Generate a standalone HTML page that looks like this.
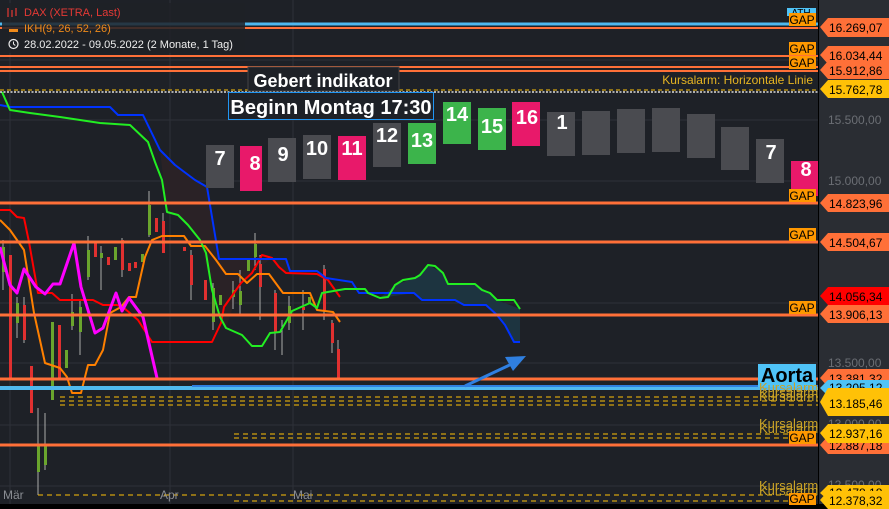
<!DOCTYPE html>
<html><head><meta charset="utf-8"><style>
html,body{margin:0;padding:0;background:#1e2127;}
body{width:889px;height:509px;overflow:hidden;position:relative;font-family:"Liberation Sans",sans-serif;}
svg{position:absolute;left:0;top:0}
</style></head><body>
<svg width="889" height="509" viewBox="0 0 889 509" xmlns="http://www.w3.org/2000/svg" font-family="Liberation Sans, sans-serif">
<rect x="0" y="0" width="889" height="509" fill="#1e2127"/>
<rect x="818" y="0" width="71" height="509" fill="#2a2d33"/>
<rect x="0" y="504" width="889" height="5" fill="#000"/>
<!-- grid -->
<g stroke="#2e3138" stroke-width="1">
<line x1="10" y1="0" x2="10" y2="504"/><line x1="170" y1="0" x2="170" y2="504"/><line x1="293" y1="0" x2="293" y2="504"/>
<line x1="0" y1="120" x2="818" y2="120"/><line x1="0" y1="181" x2="818" y2="181"/><line x1="0" y1="243" x2="818" y2="243"/><line x1="0" y1="303" x2="818" y2="303"/><line x1="0" y1="363" x2="818" y2="363"/><line x1="0" y1="425" x2="818" y2="425"/><line x1="0" y1="486" x2="818" y2="486"/>
<line x1="0" y1="60" x2="818" y2="60"/>
</g>
<!-- cloud fills -->
<polygon points="160,150 195,180 207,187 219,259 286,259 290,271 317,271 326,278 340,297 317,274 286,273 272,258 252,273 241,283 226,328 212,290 200,240 178,215 167,212" fill="#2a2226"/>
<polygon points="380,298 395,285 415,278 428,265 443,273 448,284 475,284 490,293 497,300 520,309 520,342 514,342 505,325 497,315 486,305 464,305 455,300 422,300 414,293" fill="#1d3440"/>
<!-- candles -->
<g stroke-width="1">
<g stroke="#aaa"><line x1="3" y1="240" x2="3" y2="290"/><line x1="17" y1="297" x2="17" y2="338"/><line x1="24" y1="297" x2="24" y2="343"/><line x1="38" y1="408" x2="38" y2="495"/><line x1="45" y1="413" x2="45" y2="470"/><line x1="72" y1="294" x2="72" y2="330"/><line x1="80" y1="300" x2="80" y2="355"/><line x1="88" y1="236" x2="88" y2="280"/><line x1="101" y1="246" x2="101" y2="290"/><line x1="122" y1="238" x2="122" y2="277"/><line x1="149" y1="191" x2="149" y2="237"/><line x1="163" y1="213" x2="163" y2="253"/><line x1="191" y1="250" x2="191" y2="300"/><line x1="213" y1="283" x2="213" y2="330"/><line x1="233" y1="281" x2="233" y2="309"/><line x1="240" y1="270" x2="240" y2="315"/><line x1="255" y1="233" x2="255" y2="270"/><line x1="260" y1="255" x2="260" y2="320"/><line x1="275" y1="290" x2="275" y2="350"/><line x1="282" y1="320" x2="282" y2="355"/><line x1="289" y1="296" x2="289" y2="330"/><line x1="303" y1="290" x2="303" y2="330"/><line x1="324" y1="265" x2="324" y2="320"/><line x1="332" y1="320" x2="332" y2="353"/><line x1="338" y1="340" x2="338" y2="379"/></g>
<g fill="#6aa52d"><rect x="2" y="247" width="3" height="25"/><rect x="16" y="303" width="3" height="20"/><rect x="37" y="445" width="3" height="27"/><rect x="44" y="445" width="3" height="20"/><rect x="51" y="322" width="3" height="78"/><rect x="65" y="350" width="3" height="18"/><rect x="71" y="312" width="3" height="14"/><rect x="79" y="307" width="3" height="25"/><rect x="87" y="250" width="3" height="27"/><rect x="100" y="253" width="3" height="5"/><rect x="114" y="247" width="3" height="13"/><rect x="141" y="254" width="3" height="8"/><rect x="148" y="205" width="3" height="30"/><rect x="212" y="288" width="3" height="34"/><rect x="219" y="295" width="3" height="10"/><rect x="232" y="290" width="3" height="7"/><rect x="239" y="291" width="3" height="14"/><rect x="247" y="259" width="3" height="12"/><rect x="254" y="244" width="3" height="13"/><rect x="288" y="306" width="3" height="17"/><rect x="308" y="297" width="3" height="6"/></g>
<g fill="#e03030"><rect x="9" y="255" width="3" height="125"/><rect x="23" y="305" width="3" height="35"/><rect x="30" y="366" width="3" height="47"/><rect x="58" y="325" width="3" height="55"/><rect x="94" y="242" width="3" height="15"/><rect x="107" y="257" width="3" height="8"/><rect x="121" y="240" width="3" height="30"/><rect x="128" y="263" width="3" height="8"/><rect x="134" y="262" width="3" height="6"/><rect x="155" y="218" width="3" height="14"/><rect x="162" y="221" width="3" height="32"/><rect x="183" y="247" width="3" height="4"/><rect x="190" y="255" width="3" height="30"/><rect x="204" y="280" width="3" height="20"/><rect x="259" y="264" width="3" height="23"/><rect x="274" y="293" width="3" height="40"/><rect x="302" y="307" width="3" height="3"/><rect x="323" y="269" width="3" height="41"/><rect x="331" y="323" width="3" height="20"/><rect x="337" y="349" width="3" height="30"/></g>
</g>
<!-- ichimoku lines -->
<g fill="none" stroke-width="2" stroke-linejoin="round">
<polyline stroke="#ff0000" points="0,210 10,210 17,217 24,218 29,242 38,293 52,293 60,300 93,300 103,305 117,305 124,308 138,320 152,342 212,342 221,323 224,307 241,283 252,273 262,255 272,258 279,267 286,273 317,274 328,280 340,297"/>
<polyline stroke="#ff8000" points="0,220 10,230 24,250 34,313 45,363 60,368 67,377 72,393 81,393 88,365 95,365 103,350 110,313 121,307 129,297 136,297 145,257 152,240 162,236 184,236 191,246 205,246 216,260 226,274 238,274 247,283 257,274 269,274 283,293 310,293 317,310 333,312 340,322"/>
<polyline stroke="#ff00ff" stroke-width="3" points="0,247 10,285 17,293 24,269 36,287 45,294 53,284 60,284 74,243 81,287 95,333 103,328 116,293 122,311 129,298 143,317 157,378"/>
<polyline stroke="#0033ff" points="0,105 10,107 110,107 118,115 143,115 160,150 175,165 195,180 207,187 219,259 286,259 290,271 317,271 326,278 352,282 359,293 414,293 422,300 455,300 464,305 486,305 497,315 505,325 514,342 520,342"/>
<polyline stroke="#22ee22" points="2,92 10,110 30,113 60,117 100,123 130,125 148,142 155,162 162,180 167,212 178,215 188,225 200,240 206,253 212,290 220,317 226,328 242,335 252,346 262,346 270,333 280,332 287,320 292,311 310,303 317,308 322,293 345,289 365,289 368,293 380,298 388,297 395,285 403,280 415,278 420,275 428,265 435,266 443,273 448,284 475,284 482,290 490,293 497,300 514,300 520,309"/>
</g>
<!-- horizontal lines -->
<line x1="0" y1="24" x2="818" y2="24" stroke="#4fb8ee" stroke-width="3"/>
<g stroke="#ff7038" stroke-width="3">
<line x1="0" y1="28" x2="818" y2="28" stroke-width="2"/><line x1="0" y1="56" x2="818" y2="56" stroke-width="2"/><line x1="0" y1="67" x2="818" y2="67" stroke-width="2"/><line x1="0" y1="71" x2="818" y2="71" stroke-width="2"/>
<line x1="0" y1="203" x2="818" y2="203"/><line x1="0" y1="242" x2="818" y2="242"/><line x1="0" y1="315" x2="818" y2="315"/><line x1="0" y1="379" x2="818" y2="379"/><line x1="0" y1="445" x2="818" y2="445"/>
</g>
<line x1="0" y1="90" x2="818" y2="90" stroke="#ffc107" stroke-width="1" stroke-dasharray="4,3"/>
<line x1="0" y1="92" x2="818" y2="92" stroke="#ddd" stroke-width="1.5" stroke-dasharray="2,1.5"/>
<line x1="0" y1="388" x2="818" y2="388" stroke="#4fb8ee" stroke-width="4"/>
<line x1="192" y1="386" x2="818" y2="386" stroke="#2f7fe0" stroke-width="2"/>
<g stroke="#ffc107" stroke-width="1" stroke-dasharray="5,4">
<line x1="60" y1="397" x2="818" y2="397"/><line x1="60" y1="401" x2="818" y2="401"/><line x1="60" y1="405" x2="818" y2="405"/>
<line x1="234" y1="434" x2="818" y2="434"/><line x1="234" y1="438" x2="818" y2="438"/>
<line x1="38" y1="495" x2="818" y2="495"/><line x1="234" y1="501" x2="818" y2="501"/>
</g>
<!-- arrow -->
<line x1="465" y1="386" x2="516" y2="362" stroke="#2f7fe0" stroke-width="3"/>
<polygon points="526,356 505,357 513,371" fill="#2f7fe0"/>
<!-- number boxes -->
<g font-weight="bold" font-size="20" fill="#fff" text-anchor="middle">
<rect x="206" y="145" width="28" height="43" fill="#4a4b50"/><text x="220" y="165">7</text>
<rect x="240" y="146" width="22" height="45" fill="#e8196a"/><text x="255" y="170">8</text>
<rect x="268" y="138" width="28" height="44" fill="#4a4b50"/><text x="283" y="161">9</text>
<rect x="303" y="135" width="28" height="44" fill="#4a4b50"/><text x="317" y="155">10</text>
<rect x="338" y="136" width="28" height="44" fill="#e8196a"/><text x="352" y="155">11</text>
<rect x="373" y="123" width="28" height="44" fill="#4a4b50"/><text x="387" y="142">12</text>
<rect x="408" y="123" width="28" height="41" fill="#3cb44b"/><text x="422" y="147">13</text>
<rect x="443" y="102" width="28" height="42" fill="#3cb44b"/><text x="457" y="121">14</text>
<rect x="478" y="108" width="28" height="42" fill="#3cb44b"/><text x="492" y="133">15</text>
<rect x="512" y="102" width="28" height="44" fill="#e8196a"/><text x="527" y="124">16</text>
<rect x="547" y="112" width="28" height="44" fill="#4a4b50"/><text x="562" y="129">1</text>
<rect x="582" y="111" width="28" height="44" fill="#4a4b50"/>
<rect x="617" y="109" width="28" height="44" fill="#4a4b50"/>
<rect x="652" y="108" width="28" height="44" fill="#4a4b50"/>
<rect x="687" y="114" width="28" height="44" fill="#4a4b50"/>
<rect x="721" y="127" width="28" height="43" fill="#4a4b50"/>
<rect x="756" y="139" width="28" height="44" fill="#4a4b50"/><text x="771" y="159">7</text>
<rect x="791" y="161" width="27" height="35" fill="#e8196a"/><text x="806" y="176">8</text>
</g>
<!-- text boxes -->
<rect x="248" y="67" width="151" height="24" fill="#1e2127" stroke="#444" stroke-width="1"/>
<text x="323" y="87" font-size="18" font-weight="bold" fill="#fff" text-anchor="middle">Gebert  indikator</text>
<rect x="228.5" y="92.5" width="205" height="27" fill="#1e2127" stroke="#2196f3" stroke-width="1"/>
<text x="331" y="114" font-size="20" font-weight="bold" fill="#fff" text-anchor="middle">Beginn Montag 17:30</text>
<text x="813" y="84" font-size="12" fill="#e6b422" text-anchor="end">Kursalarm: Horizontale Linie</text>
<!-- legend -->
<rect x="2" y="3" width="243" height="50" fill="#1e2127" opacity="0.85"/>
<g font-size="11">
<text x="24" y="16" fill="#e53935">DAX (XETRA, Last)</text>
<text x="24" y="32" fill="#ef8a1a">IKH(9, 26, 52, 26)</text>
<text x="24" y="48" fill="#eee">28.02.2022 - 09.05.2022   (2 Monate, 1 Tag)</text>
</g>
<g stroke="#e53935" stroke-width="1.2"><line x1="8" y1="8" x2="8" y2="17"/><line x1="12" y1="10" x2="12" y2="17"/><line x1="16" y1="8" x2="16" y2="16"/></g>
<rect x="9" y="29" width="9" height="3" fill="#ef8a1a"/>
<circle cx="13.5" cy="44" r="4.5" fill="none" stroke="#eee" stroke-width="1.2"/><path d="M13.5 41.5v2.5l1.8 1.5" stroke="#eee" fill="none" stroke-width="1"/>
<!-- Aorta / kursalarm labels -->
<rect x="758" y="364" width="58" height="23" fill="#4fc3f7"/>
<text x="787" y="382" font-size="20" font-weight="bold" fill="#000" text-anchor="middle">Aorta</text>
<g font-size="13" fill="#c9a227">
<text x="759" y="392">Kursalarm</text><text x="759" y="397">Kursalarm</text><text x="759" y="401">Kursalarm</text>
<text x="759" y="428">Kursalarm</text><text x="759" y="433">Kursalarm</text>
<text x="759" y="490">Kursalarm</text><text x="759" y="495">Kursalarm</text>
</g>
<!-- GAP labels -->
<g font-size="12" fill="#000" text-anchor="middle">
<rect x="787" y="8" width="29" height="8" fill="#4fc3f7"/><text x="801" y="16" font-size="10">ATH</text>
<rect x="789" y="13" width="27" height="13" fill="#ff9800"/><text x="802" y="24">GAP</text>
<rect x="789" y="42" width="27" height="13" fill="#ff9800"/><text x="802" y="53">GAP</text>
<rect x="789" y="56" width="27" height="13" fill="#ff9800"/><text x="802" y="67">GAP</text>
<rect x="789" y="189" width="27" height="13" fill="#ff9800"/><text x="802" y="200">GAP</text>
<rect x="789" y="228" width="27" height="13" fill="#ff9800"/><text x="802" y="239">GAP</text>
<rect x="789" y="301" width="27" height="13" fill="#ff9800"/><text x="802" y="312">GAP</text>
<rect x="789" y="431" width="27" height="13" fill="#ff9800"/><text x="802" y="442">GAP</text>
<rect x="789" y="493" width="27" height="12" fill="#ff9800"/><text x="802" y="503">GAP</text>
</g>
<!-- month labels -->
<g font-size="12" fill="#8a8d93"><text x="3" y="499">Mär</text><text x="160" y="499">Apr</text><text x="293" y="499">Mai</text></g>
<line x1="818.5" y1="0" x2="818.5" y2="509" stroke="#000" stroke-width="1"/>
<!-- axis labels -->
<g font-size="12" fill="#6b6e74"><text x="828" y="124">15.500,00</text><text x="828" y="185">15.000,00</text><text x="828" y="367">13.500,00</text><text x="828" y="428">13.000,00</text><text x="828" y="489">12.500,00</text></g>
<g font-size="12" fill="#000">
<polygon points="820,27 828,18 889,18 889,37 828,37" fill="#ff7038"/><text x="829" y="32">16.269,07</text>
<polygon points="820,55 828,46 889,46 889,64 828,64" fill="#ff7038"/><text x="829" y="60">16.034,44</text>
<polygon points="820,70 828,61 889,61 889,79 828,79" fill="#ff7038"/><text x="829" y="75">15.912,86</text>
<polygon points="820,89 828,80 889,80 889,98 828,98" fill="#ffc107"/><text x="829" y="94">15.762,78</text>
<polygon points="820,203 828,194 889,194 889,212 828,212" fill="#ff7038"/><text x="829" y="208">14.823,96</text>
<polygon points="820,242 828,233 889,233 889,251 828,251" fill="#ff7038"/><text x="829" y="247">14.504,67</text>
<polygon points="820,296 828,287 889,287 889,305 828,305" fill="#ff0000"/><text x="829" y="301">14.056,34</text>
<polygon points="820,314 828,305 889,305 889,323 828,323" fill="#ff7038"/><text x="829" y="319">13.906,13</text>
<polygon points="820,378 828,369 889,369 889,387 828,387" fill="#ff7038"/><text x="829" y="383">13.381,32</text>
<polygon points="820,388 828,380 889,380 889,396 828,396" fill="#4fc3f7"/><text x="829" y="392">13.205,12</text>
<polygon points="820,402 828,388 889,388 889,416 828,416" fill="#ffc107"/><text x="829" y="408">13.185,46</text>
<polygon points="820,445 828,436 889,436 889,454 828,454" fill="#ff7038"/><text x="829" y="450">12.887,18</text>
<polygon points="820,433 828,424 889,424 889,443 828,443" fill="#ffc107"/><text x="829" y="438">12.937,16</text>
<polygon points="820,493 828,485 889,485 889,500 828,500" fill="#ffc107"/><text x="829" y="497">12.478,18</text>
<polygon points="820,500 828,491 889,491 889,509 828,509" fill="#ffc107"/><text x="829" y="505">12.378,32</text>
</g>
</svg>
</body></html>
